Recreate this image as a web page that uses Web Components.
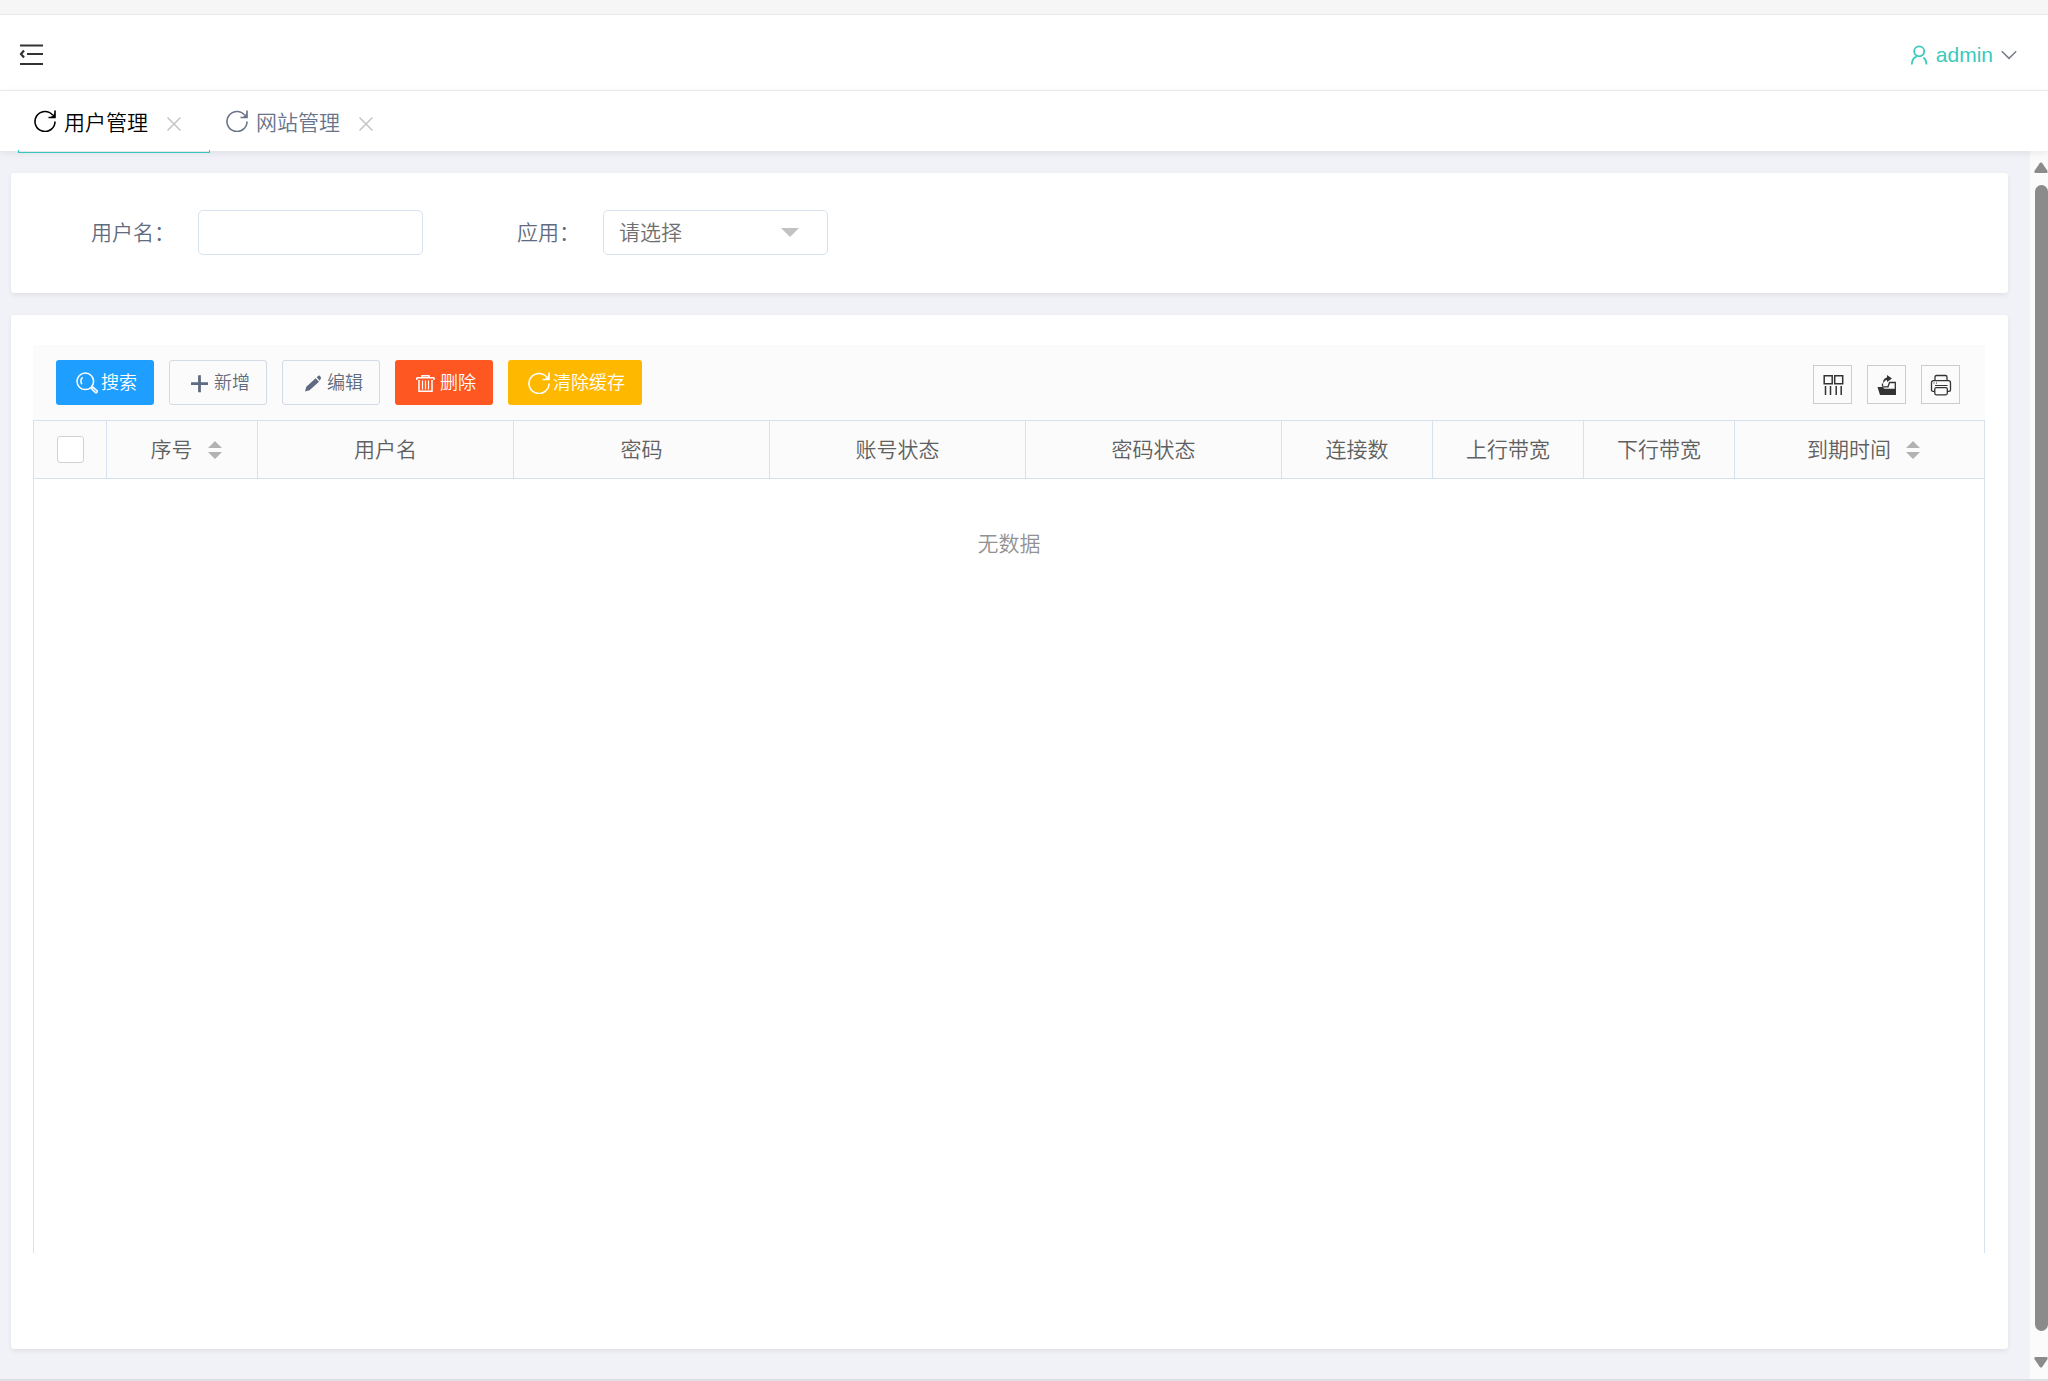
<!DOCTYPE html>
<html lang="zh-CN">
<head>
<meta charset="utf-8">
<title>用户管理</title>
<style>
html,body{margin:0;height:100%}
body{font:350 21px/30px "Liberation Sans","Noto Sans CJK SC",sans-serif;color:#5f6b80;background:#f0f2f7;--line:#d6e2ee}
</style>
</head>
<body>
<admin-app></admin-app>

<script>
const define = (name, html, setup) => customElements.define(name, class extends HTMLElement {
  constructor() {
    super();
    const tpl = document.createElement('template');
    tpl.innerHTML = '<style>*{box-sizing:border-box}button,input,select{font:inherit;color:inherit;margin:0}</style>' + html;
    this.attachShadow({mode: 'open'}).append(tpl.content.cloneNode(true));
  }
  connectedCallback() { if (setup) setup(this, this.shadowRoot); }
});

const S = 'fill="none" stroke="currentColor"';
const ICONS = {
  shrink: [24, 22, `<g ${S} stroke-width="2"><path d="M1 1.500h23M8 10h16M1 20h23"/><path d="M5 6.500L2 10l3 3.500" stroke-width="2.2"/></g>`],
  user: [18, 20, `<g ${S} stroke-width="1.8"><circle cx="9.200" cy="6.300" r="5"/><path d="M1.800 19.500c.2-4.500 1.800-7 5-7.800M13.300 12.600c2 1.400 3 3.400 3.200 6.900"/></g>`],
  down: [16, 10, `<path ${S} stroke-width="1.500" d="M.8 1.200L8 8.400l7.200-7.200"/>`],
  refresh: [22, 22, `<g ${S} stroke-width="1.600"><path d="M21 11.500A10 10 0 1 1 18.600 5"/><path d="M21 .5v7h-6.500"/></g><path fill="currentColor" d="M21 3v4.500h-4.500z"/>`],
  close: [14, 14, `<path ${S} stroke-width="1.500" d="M.5.5l13 13M13.500.5l-13 13"/>`],
  search: [22, 22, `<g ${S} stroke-width="1.500"><circle cx="9.300" cy="9.300" r="8.300"/><path d="M6.700 5.500C4.500 6.800 4.300 10.400 6 12.200"/><path d="M15.300 16.600l1.600-1.500 4.200 3.800c.8.8-.7 2.500-1.600 1.700z"/></g>`],
  plus: [22, 22, `<path ${S} stroke-width="2.800" d="M2 11.700h17M10.500 3.200v17"/>`],
  edit: [22, 22, `<path fill="currentColor" d="M3 19.500l1.300-4.700L13.700 6.200l3.300 3.600-9.500 8.500zM14.700 5.300l2-1.700c.7-.6 3 2 2.300 2.700l-1.300 2.400z"/>`],
  trash: [22, 22, `<g ${S} stroke-width="1.500"><path d="M2 5.700h17M1.800 8V5.500M19 8V5.500M7 5.500V3.700h7v1.800M4 8v11.300h13V8"/><path stroke-width="1.200" d="M7.500 8.500v9M10.500 8.500v9M13.500 8.500v9"/></g>`],
  caret: [18, 9, '<path fill="#c2c2c2" d="M0 0h18L9 9z"/>'],
  sort: [14, 18, '<path fill="#b2b2b2" d="M7 0l7 7H0zM0 11h14l-7 7z"/>'],
  columns: [22, 22, `<g ${S} stroke-width="1.500"><path d="M2.200 1.700h8v8h-8zM12.700 1.700h8v8h-8zM3.500 12v9M8.500 12v9M14.200 12v9M19.200 12v9"/></g>`],
  export: [22, 22, `<path fill="#333" d="M1.500 13h5l2 1.800H20V21H4zM11 3.500V1l5 3.500-5 3.500V6C9.500 6 8 7.500 7.500 9.500 6.500 6 8.500 4 11 3.500z"/><path fill="none" stroke="#333" stroke-width="1.300" d="M6.500 12.500V9.500M6.500 12.800h5.500l1.500-4.300h5.800V15"/>`],
  print: [22, 22, `<g ${S} stroke-width="1.300"><path d="M5 6.500V3.200C5 2 5.500 1.500 6.500 1.500h9c1 0 1.500.5 1.500 1.700v3.300M4.800 17.300H3c-1 0-1.500-.6-1.500-1.600V9c0-1.500.8-2.400 2-2.400h15c1.200 0 2 .9 2 2.400v6.700c0 1-.5 1.600-1.500 1.600h-1.800"/><rect x="4.800" y="13.600" width="12.500" height="7.200" rx="1.500"/><path stroke-width="1" d="M3.500 9h1M6 9h1M5 11.500h12.500"/></g>`],
  up: [14, 11, '<path fill="#8b8b8b" d="M6 .8Q7 0 8 .8L13.600 9q.4 2-1 2H1.400q-1.400 0-1-2z"/>']
};

customElements.define('ui-icon', class extends HTMLElement {
  constructor() { super(); this.attachShadow({mode: 'open'}); }
  connectedCallback() {
    const [w, h, body] = ICONS[this.getAttribute('name')];
    this.shadowRoot.innerHTML = `<style>:host{display:inline-flex;flex:none}svg{display:block}</style>
      <svg width="${w}" height="${h}" viewBox="0 0 ${w} ${h}" aria-hidden="true">${body}</svg>`;
  }
});

define('app-header', `<style>
  :host{display:flex;justify-content:space-between;align-items:center;height:91px;padding:15px 31px 0 19px;
    background:linear-gradient(#f6f6f6 14px,#e8e8e8 14px 15px,#fff 15px);border-bottom:1px solid #eee}
  button{display:flex;align-items:center;border:0;padding:0;background:none}
  .menu{color:#333;padding-top:4px}
  .user{gap:8px;color:#3acabb;padding-top:4px}
  .user ui-icon:last-child{color:#777d88}
</style>
<button class="menu" aria-label="收起菜单"><ui-icon name="shrink"></ui-icon></button>
<button class="user"><ui-icon name="user"></ui-icon><slot></slot><ui-icon name="down"></ui-icon></button>`);

define('app-tab', `<style>
  :host{display:flex;align-items:center;position:relative;height:60px;padding:0 29px 0 16px;color:#687489}
  :host([active]){color:#000}
  :host([active])::after{content:"";position:absolute;left:0;right:0;bottom:-2px;height:2px;border:1px solid #36c6bc;border-top:0}
  button{display:flex;align-items:center;border:0;padding:0;background:none}
  .name{gap:8px}
  .name span{padding-top:3px}
  .close{margin-left:19px;color:#c4c4c4;padding-top:5px}
</style>
<button class="name" role="tab"><ui-icon name="refresh"></ui-icon><span><slot></slot></span></button>
<button class="close" aria-label="关闭"><ui-icon name="close"></ui-icon></button>`);

define('app-tabs', `<style>
  :host{display:flex;position:relative;z-index:1;padding-left:18px;background:#fff;box-shadow:0 2px 8px rgba(0,0,0,.08)}
</style><slot></slot>`);

define('ui-card', `<style>
  :host{display:block;background:#fff;border-radius:3px;box-shadow:0 2px 5px rgba(0,0,0,.07)}
</style><slot></slot>`);

define('search-form', `<style>
  :host{display:block}
  form{display:flex;gap:94px;padding:37px 80px 38px}
  .field{display:flex;align-items:center}
  label{margin-right:23px}
  .box{position:relative;display:flex;width:225px;height:45px}
  input,select{width:100%;height:100%;padding:0 15px;border:1px solid var(--line);border-radius:5px;background:#fff;appearance:none;outline:0}
  select{color:#707070}
  .box ui-icon{position:absolute;right:29px;top:18px;pointer-events:none}
</style>
<form>
  <div class="field"><label for="name">用户名：</label><div class="box"><input id="name" type="text"></div></div>
  <div class="field"><label for="app">应用：</label><div class="box"><select id="app"><option>请选择</option></select><ui-icon name="caret"></ui-icon></div></div>
</form>`);

define('ui-button', `<style>
  :host{display:block}
  button{display:flex;align-items:center;gap:3px;height:45px;padding:0 16px 0 19px;border:1px solid #d2dae6;border-radius:3px;background:none;font-size:18px;line-height:26px;white-space:nowrap}
  :host([kind]) button{color:#fff;border-color:transparent;background:var(--bg) border-box}
  :host([kind=blue]){--bg:#1e9fff}
  :host([kind=red]){--bg:#ff5722}
  :host([kind=amber]){--bg:#ffb800}
</style>
<button type="button"><slot></slot></button>`,
(el, root) => {
  const icon = document.createElement('ui-icon');
  icon.setAttribute('name', el.getAttribute('icon'));
  root.querySelector('button').prepend(icon);
});

define('tool-button', `<style>
  :host{display:block}
  button{display:flex;align-items:center;justify-content:center;width:39px;height:39px;padding:1px 0 0;border:1px solid #ccc;background:none;color:#333}
</style>
<button type="button"></button>`,
(el, root) => {
  const b = root.querySelector('button');
  b.setAttribute('aria-label', el.getAttribute('label'));
  b.innerHTML = `<ui-icon name="${el.getAttribute('icon')}"></ui-icon>`;
});

define('table-toolbar', `<style>
  :host{display:flex;justify-content:space-between;padding:15px 25px 15px 23px;background:#fbfbfb}
  div{display:flex;gap:15px}
  .tools{padding-top:5px}
</style>
<div><slot></slot></div><div class="tools"><slot name="tools"></slot></div>`);

define('data-table', `<style>
  :host{display:flex;flex-direction:column;border:1px solid var(--line);border-bottom:0}
  table{width:100%;table-layout:fixed;border-spacing:0}
  th{height:58px;padding:0;font-weight:inherit;color:#606060;background:#fbfbfb;border:solid var(--line);border-width:0 1px 1px 0}
  th:last-child{border-right:0}
  .check{width:73px}.small{width:151px}.wide{width:256px}
  .cell{display:flex;align-items:center;justify-content:center}
  .sort{gap:15px;padding-left:8px}
  input{appearance:none;width:27px;height:27px;border:1px solid #d2d2d2;border-radius:3px;background:#fff}
  p{margin:0;padding:50px 0;text-align:center;color:#929292}
</style>
<table><thead><tr>
  <th class="check"><div class="cell"><input type="checkbox" aria-label="全选"></div></th>
  <th class="small"><div class="cell sort">序号<ui-icon name="sort"></ui-icon></div></th>
  <th class="wide">用户名</th><th class="wide">密码</th><th class="wide">账号状态</th><th class="wide">密码状态</th>
  <th class="small">连接数</th><th class="small">上行带宽</th><th class="small">下行带宽</th>
  <th><div class="cell sort">到期时间<ui-icon name="sort"></ui-icon></div></th>
</tr></thead></table>
<p>无数据</p>`);

define('scroll-rail', `<style>
  :host{display:flex;flex-direction:column;align-items:flex-end;width:18px;padding:11px 0 11px;background:#fbfbfb}
  i{flex:1;width:13px;margin:12px 0 26px;border-radius:7px;background:#8b8b8b}
  ui-icon:last-child{transform:rotate(180deg)}
</style>
<ui-icon name="up"></ui-icon><i></i><ui-icon name="up"></ui-icon>`);

define('admin-app', `<style>
  :host{display:flex;flex-direction:column;min-height:100%}
  .body{flex:1;display:flex;border-bottom:2px solid #dcdee2}
  main{flex:1;display:flex;flex-direction:column;gap:22px;padding:22px 22px 30px 11px}
  .list{flex:1;display:flex;flex-direction:column;padding:30px 23px 96px 22px}
  data-table{flex:1}
</style>
<app-header>admin</app-header>
<app-tabs role="tablist"><app-tab active>用户管理</app-tab><app-tab>网站管理</app-tab></app-tabs>
<div class="body">
  <main>
    <ui-card><search-form></search-form></ui-card>
    <ui-card class="list">
      <table-toolbar>
        <ui-button kind="blue" icon="search">搜索</ui-button>
        <ui-button icon="plus">新增</ui-button>
        <ui-button icon="edit">编辑</ui-button>
        <ui-button kind="red" icon="trash">删除</ui-button>
        <ui-button kind="amber" icon="refresh">清除缓存</ui-button>
        <tool-button slot="tools" icon="columns" label="筛选列"></tool-button>
        <tool-button slot="tools" icon="export" label="导出"></tool-button>
        <tool-button slot="tools" icon="print" label="打印"></tool-button>
      </table-toolbar>
      <data-table></data-table>
    </ui-card>
  </main>
  <scroll-rail aria-hidden="true"></scroll-rail>
</div>`);
</script>
</body>
</html>
